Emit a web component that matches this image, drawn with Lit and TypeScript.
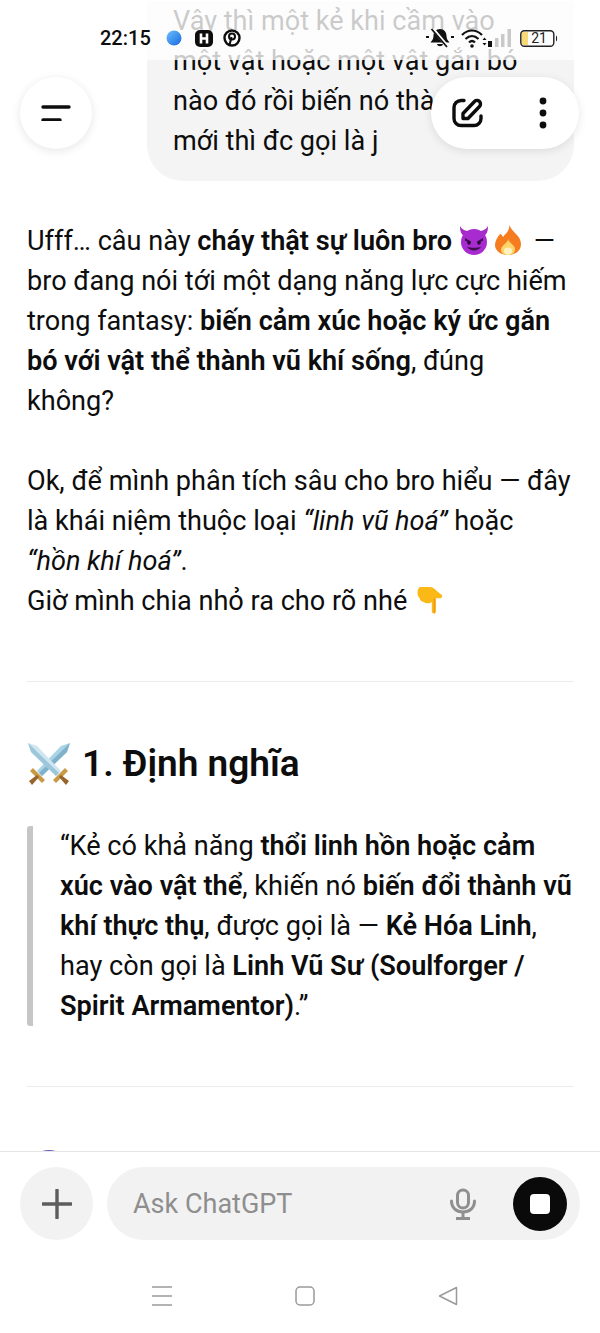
import { LitElement, css, html, svg } from 'lit';
import { customElement } from 'lit/decorators.js';

const devil = html`<svg class="emoji" viewBox="1 1 30 30"><path d="M2 2c0 5 1 8 4 10l5-5C8 7 4 6 2 2zM30 2c0 5-1 8-4 10l-5-5c3 0 7-1 9-5z" fill="#a32cc4"/><circle cx="16" cy="18" r="13" fill="#a82bd0"/><path d="M7 14l6 3.500-1 2-5-3zM25 14l-6 3.500 1 2 5-3z" fill="#3d0f4f"/><circle cx="11" cy="19" r="1.800" fill="#2b0a38"/><circle cx="21" cy="19" r="1.800" fill="#2b0a38"/><path d="M9 23c3 4.500 11 4.500 14 0-4 1-10 1-14 0z" fill="#3d0f4f"/></svg>`;
const fire = html`<svg class="emoji" viewBox="2 1 28 30"><path d="M17 1c1 6-3 8-6 12-1-2-2-3-3-3-3 4-5 7-5 11 0 6 6 10 13 10s13-4 13-11c0-8-8-11-12-19z" fill="#f57c1f"/><path d="M16 15c0 4-7 6-7 11 0 3 3 5 7 5s7-2 7-6c0-4-6-6-7-10z" fill="#fdd46a"/><ellipse cx="16" cy="27" rx="4" ry="3.400" fill="#fff3c4"/></svg>`;
const pointDown = html`<svg class="emoji" viewBox="0 0 32 32"><path d="M6 2h11c3 0 5 2 7 4l5 4c2 1 1 4-1 4h-5v14c0 3-4 3-4 0V18c-2 2-6 2-9 0-3-1-4-3-4-4C3 11 3 5 6 2z" fill="#fbb917"/><path d="M21 14h2v14c0 2-1 2.500-2 2.500z" fill="#f39a12"/></svg>`;
const swords = html`<svg class="swords" viewBox="0 0 44 44"><path d="M43 1l-3 9-25 24-5-5L34 4z" fill="#a9d3e6"/><path d="M43 1L12 31l3 3 25-24z" fill="#7fb2c9"/><path d="M1 1l3 9 25 24 5-5L10 4z" fill="#cfe6f0"/><path d="M1 1l31 30-3 3L4 10z" fill="#9cc7da"/><path d="M6 26l12 12-3 3L3 29zM38 26L26 38l3 3 12-12z" fill="#c99a45"/><path d="M10 33l-8 6 3 4 7-8zM34 33l8 6-3 4-7-8z" fill="#96642c"/></svg>`;

const batteryFill = svg`<path d="M4 2h4v13H4a2.500 2.500 0 0 1-2.500-2.500v-8A2.500 2.500 0 0 1 4 2z" fill="#f8d877"/>`;

@customElement('app-root')
export class AppRoot extends LitElement {
  render() {
    return html`
      <div class="thread">
        <div class="bubble">Vậy thì một kẻ khi cầm vào một vật hoặc một vật gắn bó nào đó rồi biến nó thành vũ khí mới thì đc gọi là j</div>

        <p class="first">Ufff… câu này <b>cháy thật sự luôn bro</b> ${devil}${fire} — bro đang nói tới một dạng năng lực cực hiếm trong fantasy: <b>biến cảm xúc hoặc ký ức gắn bó với vật thể thành vũ khí sống</b>, đúng không?</p>
        <p>Ok, để mình phân tích sâu cho bro hiểu — đây là khái niệm thuộc loại <em>“linh vũ hoá”</em> hoặc <em class="keep">“hồn khí hoá”</em>.<br />Giờ mình chia nhỏ ra cho rõ nhé ${pointDown}</p>

        <hr />
        <h2>${swords}<span>1. Định nghĩa</span></h2>
        <blockquote>“Kẻ có khả năng <b>thổi linh hồn hoặc cảm xúc vào vật thể</b>, khiến nó <b>biến đổi thành vũ khí thực thụ</b>, được gọi là — <b>Kẻ Hóa Linh</b>, hay còn gọi là <b>Linh Vũ Sư (Soulforger / Spirit Armamentor)</b>.”</blockquote>
        <hr />
        <h2 class="next"><i class="orb"></i><span>2. Kiểu người này</span></h2>
      </div>

      <div class="composer">
        <div class="row">
          <button class="round">
            <svg width="30" height="30" viewBox="0 0 30 30"><path d="M15 1v28M1 15h28" stroke="#5d5d5d" stroke-width="3.400" stroke-linecap="round"/></svg>
          </button>
          <div class="input">
            <span class="hint">Ask ChatGPT</span>
            <svg class="mic" width="28" height="32" viewBox="0 0 28 32"><rect x="8.500" y="2" width="11" height="18" rx="5.500" fill="none" stroke="#8f8f8f" stroke-width="3"/><path d="M2.500 13c0 7 5 11 11.500 11s11.500-4 11.500-11" fill="none" stroke="#8f8f8f" stroke-width="3" stroke-linecap="round"/><path d="M14 24v6M7 30.500h14" stroke="#8f8f8f" stroke-width="3"/></svg>
            <span class="stop"><i></i></span>
          </div>
        </div>
        <div class="nav">
          <svg width="20" height="20" viewBox="0 0 20 20"><path d="M0 1h20M0 10h20M0 19h20" stroke="#9a9a9a" stroke-width="1.300"/></svg>
          <svg width="20" height="20" viewBox="0 0 20 20"><rect x="1" y="1" width="18" height="18" rx="4" fill="none" stroke="#9a9a9a" stroke-width="1.500"/></svg>
          <svg width="20" height="20" viewBox="0 0 20 20"><path d="M18.500 1.500v17L1.500 10z" fill="none" stroke="#9a9a9a" stroke-width="1.500" stroke-linejoin="round"/></svg>
        </div>
      </div>

      <div class="status">
        <span class="time">22:15</span>
        <svg class="s1" width="16" height="16" viewBox="0 0 16 16"><defs><linearGradient id="dot" x1="0" y1="0" x2="1" y2="1"><stop offset="0" stop-color="#6cc0fb"/><stop offset="1" stop-color="#1769e0"/></linearGradient></defs><circle cx="8" cy="8" r="7.500" fill="url(#dot)"/></svg>
        <svg class="s2" width="18" height="17" viewBox="0 0 18 17"><rect width="18" height="17" rx="5" fill="#0d0d0d"/><path d="M6 3.500v10M12 3.500v10M6 8.500h6" stroke="#fff" stroke-width="2.600"/></svg>
        <svg class="s3" width="18" height="18" viewBox="0 0 18 18"><circle cx="9" cy="9" r="7.500" fill="none" stroke="#0d0d0d" stroke-width="2.400"/><circle cx="9" cy="7.500" r="3" fill="none" stroke="#0d0d0d" stroke-width="2"/><path d="M8.500 8l-2 8" stroke="#0d0d0d" stroke-width="2"/></svg>
        <span class="fill"></span>
        <svg class="bell" width="30" height="20" viewBox="0 0 30 20"><path d="M15 1c-4 0-6.500 3-6.500 7 0 3-1.500 4.500-3 6.500h19c-1.500-2-3-3.500-3-6.500 0-4-2.500-7-6.500-7zM12 16c.5 3 5.500 3 6 0z" fill="#111"/><path d="M8 1l15 18" stroke="#fff" stroke-width="3.200"/><path d="M6.500 1L22 19" stroke="#111" stroke-width="1.800"/><path d="M1 9h3M26 9h3" stroke="#111" stroke-width="2"/></svg>
        <svg class="wifi" width="26" height="20" viewBox="0 0 26 20"><path d="M1 7c6-6 14-6 20 0M4.500 11c4-4 9-4 13 0M8 14.500c2-2 4-2 6 0" fill="none" stroke="#111" stroke-width="2.200"/><circle cx="11" cy="18" r="1.800" fill="#111"/><path d="M21.500 12l2-2.500 2 2.500zM21.500 15l2 2.500 2-2.500z" fill="#111"/></svg>
        <svg class="bars" width="24" height="20" viewBox="0 0 24 20"><rect x="0" y="13" width="4" height="6" fill="#111"/><rect x="7" y="10" width="3.500" height="9" fill="#c9c9c9"/><rect x="13" y="6" width="3.500" height="13" fill="#c9c9c9"/><rect x="19.500" y="1" width="3.500" height="18" fill="#c9c9c9"/></svg>
        <span class="batt">
          <svg width="38" height="17" viewBox="0 0 38 17">${batteryFill}<rect x=".8" y=".8" width="33" height="15.400" rx="3.500" fill="none" stroke="#222" stroke-width="1.400"/><path d="M36 5.500c1.500.5 1.500 5.500 0 6z" fill="#222"/></svg>
          <span>21</span>
        </span>
      </div>

      <button class="float menu">
        <svg width="30" height="16" viewBox="0 0 30 16"><path d="M2 2h26M2 15h17" stroke="#0d0d0d" stroke-width="3.400" stroke-linecap="round"/></svg>
      </button>
      <div class="float pill">
        <svg width="32" height="30" viewBox="0 0 32 30"><path d="M12 2.500H9A7 7 0 0 0 2 9.500v11a7 7 0 0 0 7 7h13a7 7 0 0 0 7-7V18" fill="none" stroke="#0d0d0d" stroke-width="3.400" stroke-linecap="round"/><path d="M11 20.500v-5L22.500 3.500a3.600 3.600 0 0 1 5 0 3.600 3.600 0 0 1 0 5L16 20.500z" fill="none" stroke="#0d0d0d" stroke-width="3.400" stroke-linejoin="round"/></svg>
        <svg width="8" height="32" viewBox="0 0 8 32"><circle cx="4" cy="4" r="3.400" fill="#0d0d0d"/><circle cx="4" cy="16" r="3.400" fill="#0d0d0d"/><circle cx="4" cy="28" r="3.400" fill="#0d0d0d"/></svg>
      </div>
    `;
  }

  static styles = css`
    :host {
      display: flex;
      flex-direction: column;
      position: relative;
      width: 600px;
      height: 1333px;
      overflow: hidden;
      background: #fff;
      color: #0d0d0d;
      font-family: Roboto, "Noto Sans", sans-serif;
      font-size: 27.1px;
      line-height: 40px;
    }
    .thread {
      flex: 1;
      min-height: 0;
      overflow: hidden;
      padding: 1px 26px 0 27px;
    }
    .bubble {
      margin-left: 120px;
      padding: 0 26px 20px;
      background: #f4f4f4;
      border-radius: 0 0 36px 36px;
    }
    p {
      margin: 0 0 40px;
    }
    p.first {
      margin-top: 40px;
    }
    b {
      font-weight: 600;
    }
    .keep {
      white-space: nowrap;
    }
    .emoji {
      display: inline-block;
      width: 30px;
      height: 30px;
      vertical-align: -5px;
      margin: 0 4px 0 0;
    }
    hr {
      border: 0;
      border-top: 1px solid #ececec;
      margin: 60px 0;
    }
    h2 {
      display: flex;
      align-items: center;
      gap: 11px;
      margin: 0 0 40px;
      font-size: 37px;
      line-height: 44px;
      font-weight: 600;
    }
    .swords {
      width: 44px;
      height: 44px;
      flex: none;
    }
    blockquote {
      margin: 0;
      padding-left: 27px;
      border-left: 6px solid #c6c6c6;
      border-radius: 3px;
    }
    .next {
      margin-top: 63px;
    }
    .orb {
      flex: none;
      width: 44px;
      height: 44px;
      border-radius: 50%;
      background: #6a55b5;
    }
    .composer {
      flex: none;
      height: 182px;
      box-sizing: border-box;
      background: #fff;
      border-top: 1px solid #e6e6e6;
      padding: 15px 20px 0;
    }
    .row {
      display: flex;
      gap: 14px;
    }
    button {
      border: 0;
      padding: 0;
      font: inherit;
    }
    .round {
      display: flex;
      align-items: center;
      justify-content: center;
      flex: none;
      width: 73px;
      height: 73px;
      border-radius: 50%;
      background: #f2f2f2;
    }
    .input {
      flex: 1;
      display: flex;
      align-items: center;
      height: 73px;
      padding: 0 13px 0 26px;
      border-radius: 37px;
      background: #f2f2f2;
    }
    .hint {
      flex: 1;
      color: #8e8e8e;
      font-size: 27px;
    }
    .mic {
      margin-right: 36px;
    }
    .stop {
      display: flex;
      align-items: center;
      justify-content: center;
      width: 54px;
      height: 54px;
      border-radius: 50%;
      background: #0a0a0a;
    }
    .stop i {
      width: 20px;
      height: 20px;
      border-radius: 4px;
      background: #fff;
    }
    .nav {
      display: flex;
      justify-content: center;
      gap: 123px;
      margin: 46px 0 0 10px;
    }
    .status {
      position: absolute;
      top: 0;
      left: 0;
      right: 0;
      height: 76px;
      box-sizing: border-box;
      padding: 0 42px 0 100px;
      display: flex;
      align-items: center;
      background: linear-gradient(rgba(255, 255, 255, 0.78) 60px, transparent 60px);
    }
    .time {
      font-size: 20px;
      font-weight: 500;
      line-height: 24px;
    }
    .s1 {
      margin-left: 15px;
    }
    .s2 {
      margin-left: 13px;
    }
    .s3 {
      margin-left: 10px;
    }
    .fill {
      flex: 1;
    }
    .wifi {
      margin-left: 6px;
    }
    .bars {
      margin: 0 8px 0 1px;
    }
    .batt {
      position: relative;
      display: flex;
    }
    .batt span {
      position: absolute;
      left: 8px;
      top: 0;
      width: 22px;
      text-align: center;
      font-size: 14px;
      line-height: 17px;
      color: #222;
    }
    .float {
      position: absolute;
      top: 77px;
      height: 72px;
      background: #fff;
      border-radius: 36px;
      box-shadow: 0 2px 10px rgba(0, 0, 0, 0.1);
      display: flex;
      align-items: center;
    }
    .menu {
      left: 20px;
      width: 72px;
      justify-content: center;
    }
    .pill {
      left: 431px;
      width: 148px;
      box-sizing: border-box;
      padding: 0 32px 0 21px;
      justify-content: space-between;
    }
  `;
}

declare global {
  interface HTMLElementTagNameMap {
    'app-root': AppRoot
  }
}
